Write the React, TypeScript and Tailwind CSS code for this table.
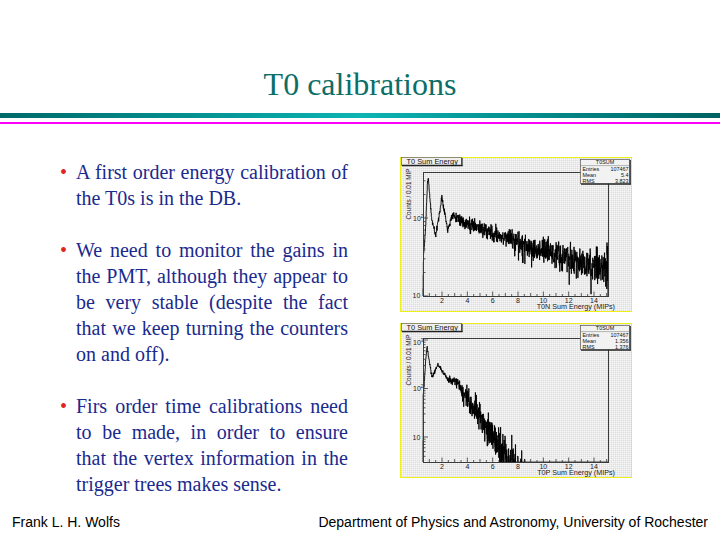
import React from "react";

function mulberry32(seed: number) {
  let a = seed;
  return function () {
    a |= 0;
    a = (a + 0x6d2b79f5) | 0;
    let t = Math.imul(a ^ (a >>> 15), 1 | a);
    t = (t + Math.imul(t ^ (t >>> 7), 61 | t)) ^ t;
    return ((t ^ (t >>> 14)) >>> 0) / 4294967296;
  };
}

const X0 = 23;
const X1 = 208;
const Y0 = 15;
const Y1 = 139;
const px = (x: number) => 42 + (x - 2) * 12.667;

function interp(pts: [number, number][], x: number) {
  if (x <= pts[0][0]) return pts[0][1];
  for (let i = 1; i < pts.length; i++) {
    if (x <= pts[i][0]) {
      const [xa, ya] = pts[i - 1];
      const [xb, yb] = pts[i];
      return ya + ((x - xa) / (xb - xa)) * (yb - ya);
    }
  }
  return pts[pts.length - 1][1];
}

const pts1: [number, number][] = [
  [0.5, 139], [0.54, 100], [0.7, 72], [0.85, 26], [0.92, 21], [1.0, 34], [1.2, 64], [1.5, 78],
  [1.75, 60], [2.0, 41], [2.2, 55], [2.45, 73], [2.7, 62], [2.95, 57], [3.3, 62], [4, 67],
  [6, 76], [9, 90], [11.5, 100], [15.2, 113],
];

const pts2: [number, number][] = [
  [0.5, 139], [0.52, 72], [0.6, 60], [0.72, 36], [0.82, 24], [0.95, 34], [1.2, 54], [1.45, 48],
  [1.68, 41], [2.1, 50], [2.5, 57], [3.2, 60], [4.4, 82], [5.4, 99], [6.2, 117], [6.7, 133],
  [8, 152], [9, 170], [15.2, 260],
];

function hist(pts: [number, number][], seed: number, kind: 1 | 2): string {
  const rnd = mulberry32(seed);
  const gauss = () => {
    const u = Math.max(1e-9, rnd());
    const v = rnd();
    return Math.sqrt(-2 * Math.log(u)) * Math.cos(2 * Math.PI * v);
  };
  const step = 0.014;
  let d = `M${X0} ${Y1}`;
  for (let x = 0.5; x < 15.1; x += step) {
    const base = interp(pts, x + step / 2);
    let s: number;
    if (kind === 1) s = x < 1.2 ? 0.8 : x < 3 ? 1.5 : 2.4 + (x - 3) * 0.55;
    else s = x < 2.5 ? 1.0 : Math.min(12, 1.6 + (x - 2.5) * 2.3);
    let y = base + gauss() * s;
    if (kind === 1 && x > 8 && rnd() < 0.01) y = base + s * 3.5;
    if (kind === 2 && x > 6.8 && x < 8.8 && rnd() < 0.06 * ((8.8 - x) / 2)) y = Y1 - 3 - rnd() * 14;
    y = Math.max(Y0 + 1, Math.min(Y1, y));
    const xb = Math.min(X1, px(x + step));
    d += ` V${y.toFixed(1)} H${xb.toFixed(2)}`;
    if (xb >= X1) break;
  }
  d += ` V${Y1}`;
  return d;
}

const path1 = hist(pts1, 11, 1);
const path2 = hist(pts2, 23, 2);

type YLabel = { y: number; exp?: string };

type PlotProps = {
  id: string;
  path: string;
  yTicks: { y: number; major: boolean }[];
  yLabels: YLabel[];
  mean: string;
  rms: string;
  xTitle: string;
};

function Plot({ id, path, yTicks, yLabels, mean, rms, xTitle }: PlotProps) {
  const xTicks: { x: number; len: number }[] = [];
  for (let v = 0.5; v <= 15.01; v += 0.5) {
    const p = px(v);
    if (p <= X0 + 0.5 || p >= X1 - 0.5) continue;
    const len = Math.abs(v % 2) < 0.01 ? 4.5 : Math.abs(v % 1) < 0.01 ? 3 : 2;
    xTicks.push({ x: p, len });
  }
  const labels = [2, 4, 6, 8, 10, 12, 14];
  return (
    <svg width="232" height="155" viewBox="0 0 232 155" className="block">
      <defs>
        <pattern id={`dither-${id}`} width="2" height="2" patternUnits="userSpaceOnUse">
          <rect width="2" height="2" fill="#ebebeb" />
          <rect width="1" height="1" fill="#f7f7f7" />
          <rect x="1" y="1" width="1" height="1" fill="#dfdfdf" />
        </pattern>
      </defs>
      <rect x="0" y="0" width="232" height="155" fill={`url(#dither-${id})`} />
      <rect x="0.5" y="0.5" width="231" height="154" fill="none" stroke="#efef1a" strokeWidth="1" shapeRendering="crispEdges" />
      <path d={path} fill="none" stroke="#000" strokeWidth="0.9" />
      <rect x={X0} y={Y0} width={X1 - X0} height={Y1 - Y0} fill="none" stroke="#3a3a3a" strokeWidth="1" shapeRendering="crispEdges" />
      {xTicks.map((t, i) => (
        <line key={i} x1={t.x} x2={t.x} y1={Y1} y2={Y1 - t.len} stroke="#333" strokeWidth="0.8" />
      ))}
      {yTicks.map((t, i) => (
        <line key={i} x1={X0} x2={X0 + (t.major ? 5 : 2.5)} y1={t.y} y2={t.y} stroke="#333" strokeWidth="0.8" />
      ))}
      {labels.map((v) => (
        <text key={v} x={px(v)} y={145.5} fontSize="7" textAnchor="middle" fill="#222" fontFamily="'Liberation Sans', Arial, sans-serif">
          {v}
        </text>
      ))}
      {yLabels.map((l, i) => (
        <text key={i} x={l.exp ? 13 : 12.5} y={l.y + 2.5} fontSize="7" fill="#222" fontFamily="'Liberation Sans', Arial, sans-serif">
          10
          {l.exp ? (
            <tspan fontSize="4.5" dy="-3">
              {l.exp}
            </tspan>
          ) : null}
        </text>
      ))}
      <text
        x={0}
        y={0}
        fontSize="6.4"
        fill="#222"
        textAnchor="middle"
        fontFamily="'Liberation Sans', Arial, sans-serif"
        transform="translate(10.5 37) rotate(-90)"
      >
        Counts / 0.01 MIP
      </text>
      <text x={215} y={152} fontSize="7.2" textAnchor="end" fill="#222" fontFamily="'Liberation Sans', Arial, sans-serif">
        {xTitle}
      </text>
      <rect x="1.5" y="0.5" width="60" height="7.5" fill="#f0f0f0" stroke="#666" strokeWidth="0.7" />
      <line x1="62" y1="1" x2="62" y2="9" stroke="#222" strokeWidth="1.2" />
      <line x1="2" y1="8.6" x2="62.6" y2="8.6" stroke="#222" strokeWidth="1.2" />
      <text x="6.5" y="6.9" fontSize="7.4" fill="#111" fontFamily="'Liberation Sans', Arial, sans-serif">
        T0 Sum Energy
      </text>
      <rect x="180.5" y="2.5" width="49" height="24" fill="#f2f2f2" stroke="#555" strokeWidth="0.7" />
      <line x1="230.2" y1="3" x2="230.2" y2="27.5" stroke="#222" strokeWidth="1.2" />
      <line x1="181" y1="27.2" x2="230.8" y2="27.2" stroke="#222" strokeWidth="1.2" />
      <line x1="180.5" y1="8.6" x2="229.5" y2="8.6" stroke="#777" strokeWidth="0.5" />
      <g fontSize="5.4" fill="#111" fontFamily="'Liberation Sans', Arial, sans-serif">
        <text x="205" y="7.4" textAnchor="middle">T0SUM</text>
        <text x="182.5" y="14">Entries</text>
        <text x="228.5" y="14" textAnchor="end">107467</text>
        <text x="182.5" y="20">Mean</text>
        <text x="228.5" y="20" textAnchor="end">{mean}</text>
        <text x="182.5" y="26">RMS</text>
        <text x="228.5" y="26" textAnchor="end">{rms}</text>
      </g>
    </svg>
  );
}

const py1 = (c: number) => 139 - (Math.log10(c) - 1) * 78;
const py2 = (c: number) => 114 - (Math.log10(c) - 1) * 48.5;

function logTicks(f: (c: number) => number) {
  const out: { y: number; major: boolean }[] = [];
  for (const dec of [1, 10, 100, 1000]) {
    for (let m = 1; m <= 9; m++) {
      const c = dec * m;
      const y = f(c);
      if (y > Y0 + 0.5 && y <= Y1 + 0.01) out.push({ y, major: m === 1 });
    }
  }
  return out;
}

const yTicks1 = logTicks(py1);
const yTicks2 = logTicks(py2);

const paras: string[][] = [
  ["A first order energy calibration of", "the T0s is in the DB."],
  [
    "We need to monitor the gains in",
    "the PMT, although they appear to",
    "be very stable (despite the fact",
    "that we keep turning the counters",
    "on and off).",
  ],
  [
    "Firs order time calibrations need",
    "to be made, in order to ensure",
    "that the vertex information in the",
    "trigger trees makes sense.",
  ],
];

export default function App() {
  return (
    <div className="w-[720px] h-[540px] bg-white flex flex-col overflow-hidden">
      <div className="pt-[66px] text-center text-[32px] leading-[37px] text-[#0b6e67] font-['Liberation_Serif',serif]">
        T0 calibrations
      </div>
      <div className="mt-[10px] h-[5px] bg-linear-to-r from-[#006a6a] via-[#0cb4b4] to-[#006262]" />
      <div className="mt-[4px] h-[2px] bg-[#ff00ff]" />
      <div className="flex flex-1">
        <div className="w-[400px] pl-[60px] pt-[35px] flex flex-col gap-[26px] font-['Liberation_Serif',serif] text-[20px] leading-[26px] text-[#1a2a8e]">
          {paras.map((p, i) => (
            <div key={i} className="flex">
              <span className="w-[16px] shrink-0 text-[#e3231f]">•</span>
              <div className="w-[272px]">
                {p.map((line, j) => (
                  <div
                    key={j}
                    className={
                      j < p.length - 1
                        ? "text-justify [text-align-last:justify] whitespace-nowrap"
                        : "whitespace-nowrap"
                    }
                  >
                    {line}
                  </div>
                ))}
              </div>
            </div>
          ))}
        </div>
        <div className="pt-[33px] flex flex-col gap-[11px]">
          <Plot
            id="a"
            path={path1}
            yTicks={yTicks1}
            yLabels={[{ y: py1(100), exp: "2" }, { y: py1(10) - 1 }]}
            mean="5.4"
            rms="3.823"
            xTitle="T0N Sum Energy (MIPs)"
          />
          <Plot
            id="b"
            path={path2}
            yTicks={yTicks2}
            yLabels={[{ y: py2(1000) + 2, exp: "3" }, { y: py2(100), exp: "2" }, { y: py2(10) }]}
            mean="1.356"
            rms="1.376"
            xTitle="T0P Sum Energy (MIPs)"
          />
        </div>
      </div>
      <div className="flex justify-between px-[12px] pb-[10px] text-[14px] leading-[16px] text-black font-['Liberation_Sans',Arial,sans-serif]">
        <span>Frank L. H. Wolfs</span>
        <span>Department of Physics and Astronomy, University of Rochester</span>
      </div>
    </div>
  );
}
